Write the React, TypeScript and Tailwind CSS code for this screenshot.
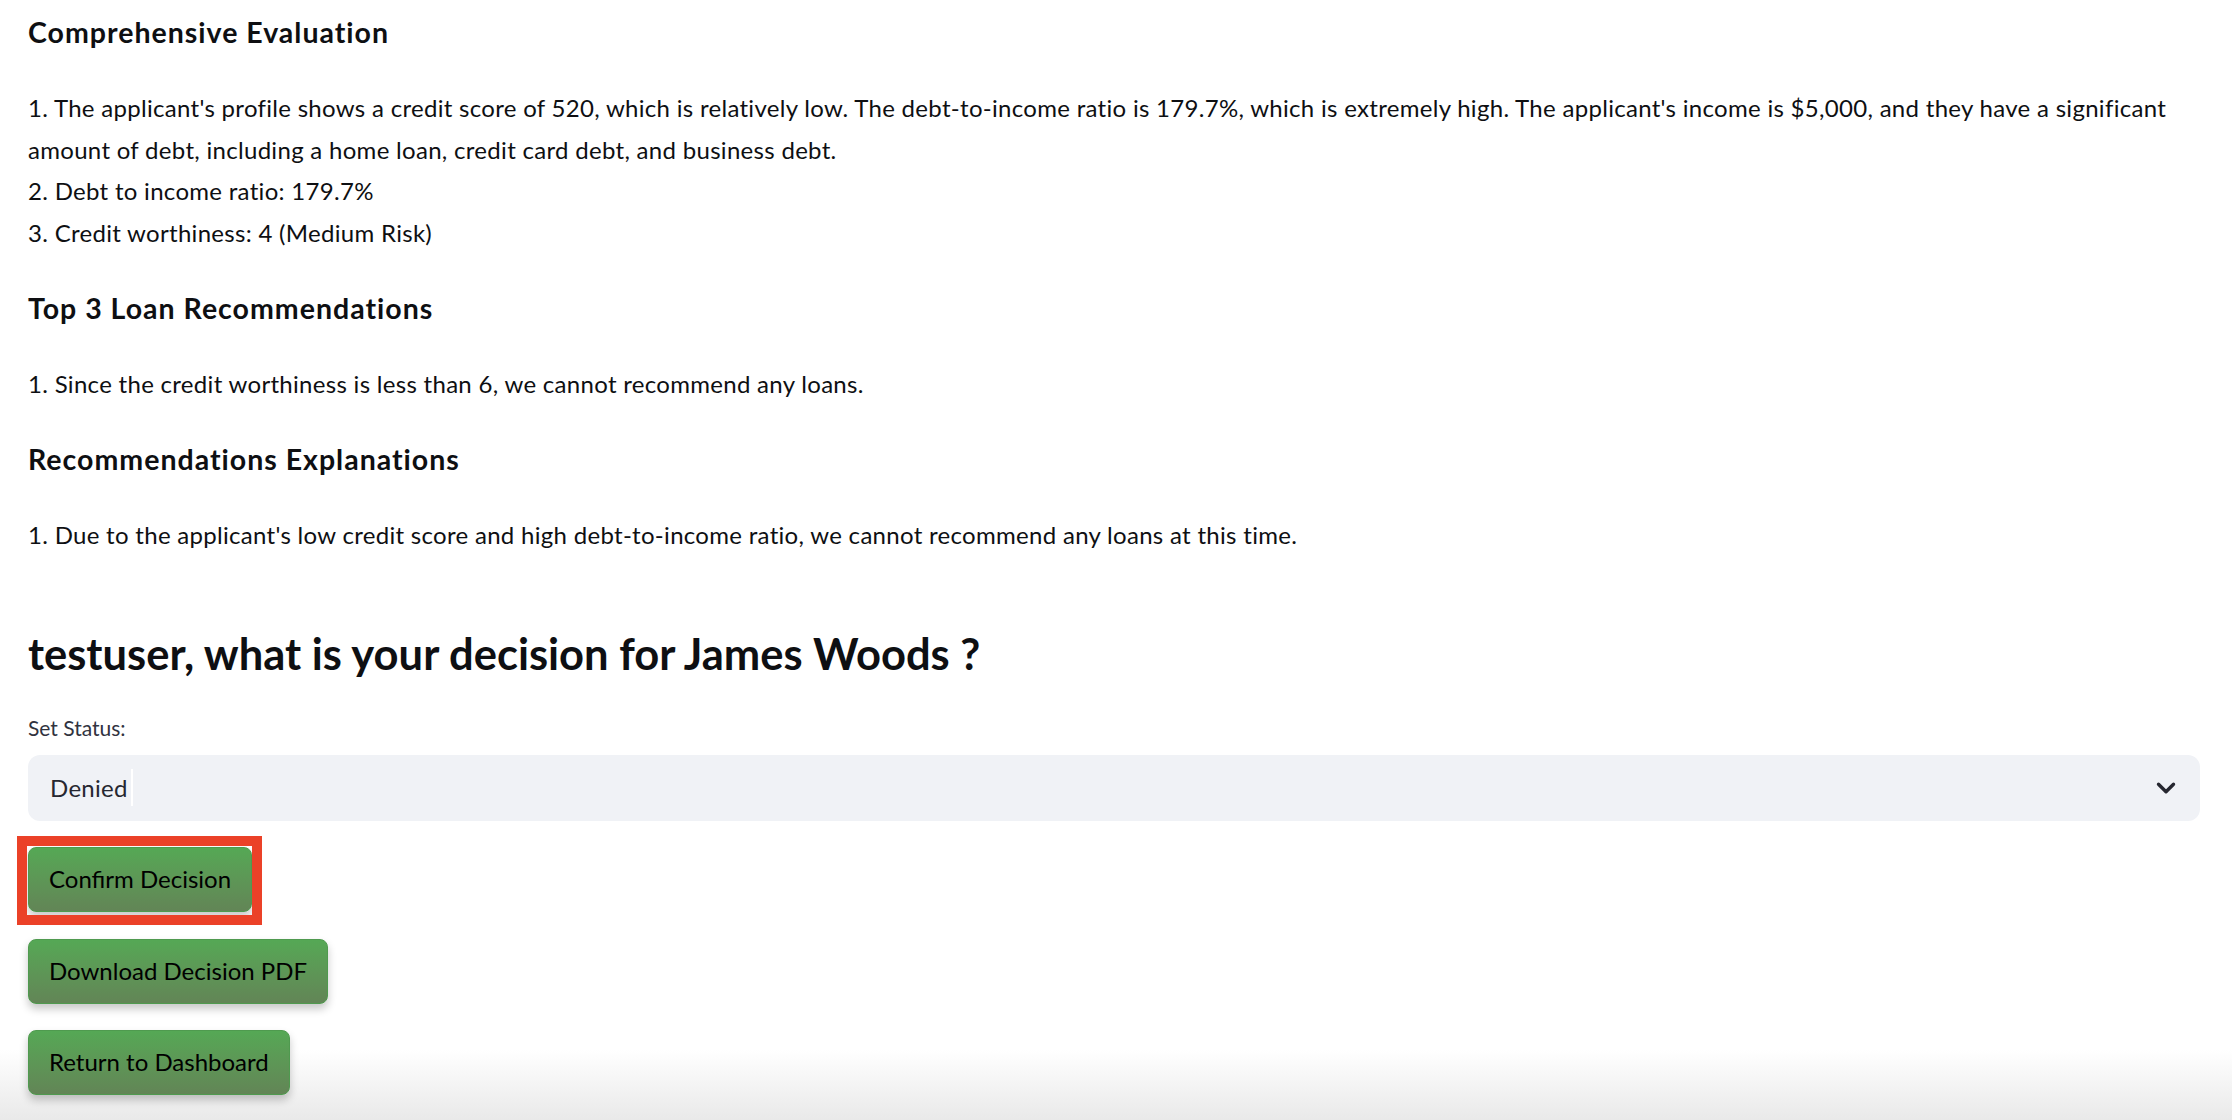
import React from "react";
import { ChevronDown } from "lucide-react";

const font = { fontFamily: "Lato, 'Noto Sans', sans-serif" };

function GreenButton({ label }: { label: string }) {
  return (
    <button
      type="button"
      className="h-[65px] px-[20px] rounded-[8px] border border-[#4f9a4f] bg-gradient-to-b from-[#55a855] to-[#628556] text-[24px] text-black shadow-[0_5px_8px_rgba(0,0,0,0.22)] leading-none"
    >
      {label}
    </button>
  );
}

export default function App() {
  return (
    <div className="relative w-full h-[1120px] overflow-hidden bg-white" style={font}>
      <div className="pointer-events-none absolute left-0 right-0 bottom-0 h-[70px] bg-gradient-to-b from-[rgba(255,255,255,0)] to-[#e9e9e9]" />
      <div className="relative flex flex-col items-start pl-[28px] pr-[32px] text-[#0e0f12]">
        <h5 className="mt-[13px] text-[28.5px] font-bold leading-[38px] tracking-[1px]">Comprehensive Evaluation</h5>
        <p className="mt-[36px] text-[24px] leading-[41.6px] tracking-[0.3px]">
          1. The applicant's profile shows a credit score of 520, which is relatively low. The debt-to-income ratio is 179.7%, which is extremely high. The applicant's income is $5,000, and they have a significant amount of debt, including a home loan, credit card debt, and business debt.
          <br />
          2. Debt to income ratio: 179.7%
          <br />
          3. Credit worthiness: 4 (Medium Risk)
        </p>
        <h5 className="mt-[36px] text-[28.5px] font-bold leading-[38px] tracking-[1px]">Top 3 Loan Recommendations</h5>
        <p className="mt-[36px] text-[24px] leading-[41.6px] tracking-[0.3px]">
          1. Since the credit worthiness is less than 6, we cannot recommend any loans.
        </p>
        <h5 className="mt-[35px] text-[28.5px] font-bold leading-[38px] tracking-[1px]">Recommendations Explanations</h5>
        <p className="mt-[36px] text-[24px] leading-[41.6px] tracking-[0.3px]">
          1. Due to the applicant's low credit score and high debt-to-income ratio, we cannot recommend any loans at this time.
        </p>
        <h2 className="mt-[71px] text-[43.5px] font-bold leading-[52px]">
          testuser, what is your decision for James Woods ?
        </h2>
        <label className="mt-[34px] text-[21px] leading-[30px] text-[#31333f]">Set Status:</label>
        <div className="mt-[12px] w-full h-[66px] rounded-[12px] bg-[#f0f2f6] flex items-center pl-[22px] pr-[19px] text-[#262730]">
          <span className="text-[24px] leading-[41.6px] tracking-[0.3px]">Denied</span>
          <span className="ml-[3px] w-[2px] h-[37px] bg-white" />
          <div className="flex-1" />
          <ChevronDown size={30} strokeWidth={2.7} className="text-[#262730]" />
        </div>
        <div className="relative mt-[26px]">
          <GreenButton label="Confirm Decision" />
          <div className="pointer-events-none absolute -top-[11px] -left-[11px] -right-[10px] -bottom-[13px] border-[10px] border-[#eb4128]" />
        </div>
        <div className="mt-[27px]">
          <GreenButton label="Download Decision PDF" />
        </div>
        <div className="mt-[26px]">
          <GreenButton label="Return to Dashboard" />
        </div>
      </div>
    </div>
  );
}
